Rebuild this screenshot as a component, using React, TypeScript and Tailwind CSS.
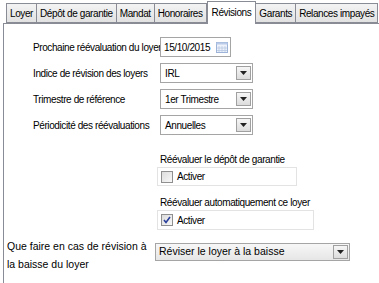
import React from 'react';

const tabs = ['Loyer', 'Dépôt de garantie', 'Mandat', 'Honoraires', 'Révisions', 'Garants', 'Relances impayés'];

const Arrow = () => (
  <div className="ml-auto mr-[1px] flex h-[14px] w-[15px] shrink-0 items-center justify-center border border-[#a0a0a0] bg-gradient-to-b from-[#f6f6f6] to-[#dcdcdc]">
    <svg width="7" height="4" viewBox="0 0 7 4">
      <path d="M0 0h7L3.5 4z" fill="#222" />
    </svg>
  </div>
);

const Select = ({ value, w }: { value: string; w: string }) => (
  <div className={`flex h-[20px] items-center border border-[#a5a5a5] bg-white pl-[4px] ${w}`}>
    <span>{value}</span>
    <Arrow />
  </div>
);

const Row = ({ label, children }: { label: string; children: React.ReactNode }) => (
  <div className="flex items-center">
    <div className="w-[127px] shrink-0">{label}</div>
    {children}
  </div>
);

const CheckBox = ({ checked }: { checked?: boolean }) => (
  <div className="flex h-[12px] w-[12px] shrink-0 items-center justify-center border border-[#8f8f8f] bg-gradient-to-br from-[#dcdcdc] to-[#f8f8f8]">
    {checked && (
      <svg width="8" height="8" viewBox="0 0 8 8">
        <path d="M1 4l2 2.5L7 1" stroke="#2a3f9a" strokeWidth="1.6" fill="none" />
      </svg>
    )}
  </div>
);

const App = () => {
  return (
    <div
      className="relative h-[283px] w-[379px] overflow-hidden whitespace-nowrap bg-white text-[10px] tracking-[-0.4px] text-black"
      style={{ fontFamily: '"Liberation Sans", Arial, sans-serif' }}
    >
      <div className="flex items-end pl-[6px] pt-[1px]">
        {tabs.map((t) =>
          t === 'Révisions' ? (
            <div key={t} className="relative z-10 -mb-[1px] flex h-[23px] items-center border border-b-0 border-[#898c95] bg-white px-[4px] pb-[1px]">
              {t}
            </div>
          ) : (
            <div key={t} className="flex h-[20px] items-center border border-l-0 border-[#898c95] bg-gradient-to-b from-[#f3f3f3] to-[#e2e2e2] px-[3px] first:border-l">
              {t}
            </div>
          )
        )}
      </div>
      <div className="ml-[3px] h-[260px] border-l border-t border-[#898c95] pt-[13px]">
        <div className="flex flex-col gap-[6px] pl-[29px]">
          <Row label="Prochaine réévaluation du loyer">
            <div className="flex h-[20px] w-[71px] items-center border border-[#a5a5a5] bg-white pl-[3px]">
              <span>15/10/2015</span>
              <svg className="ml-auto mr-[1px]" width="14" height="14" viewBox="0 0 14 14">
                <rect x="1.5" y="2.5" width="11" height="10" fill="#eef3fb" stroke="#9db4d8" />
                <rect x="1.5" y="2.5" width="11" height="2" fill="#b9cbe8" />
                <path d="M4 6v6M7 6v6M10 6v6M2 8h10M2 10.5h10" stroke="#b8c8e2" strokeWidth="0.8" />
              </svg>
            </div>
          </Row>
          <Row label="Indice de révision des loyers">
            <Select value="IRL" w="w-[93px]" />
          </Row>
          <Row label="Trimestre de référence">
            <Select value="1er Trimestre" w="w-[93px]" />
          </Row>
          <Row label="Périodicité des réévaluations">
            <Select value="Annuelles" w="w-[93px]" />
          </Row>
        </div>
        <div className="mt-[17px] flex flex-col pl-[153px]">
          <div className="pl-[3px]">Réévaluer le dépôt de garantie</div>
          <div className="flex h-[19px] w-[140px] items-center gap-[4px] border border-[#e3e3e3] pl-[3px]">
            <CheckBox />
            <span>Activer</span>
          </div>
          <div className="mt-[9px] pl-[3px]">Réévaluer automatiquement ce loyer</div>
          <div className="flex h-[20px] w-[157px] items-center gap-[4px] border border-[#e3e3e3] pl-[3px]">
            <CheckBox checked />
            <span>Activer</span>
          </div>
        </div>
        <div className="mt-[7px] flex items-start pl-[3px] text-[10.5px] tracking-normal">
          <div className="w-[148px] leading-[18px]">
            Que faire en cas de révision à<br />la baisse du loyer
          </div>
          <div className="mt-[6px] flex h-[18px] w-[195px] items-center border border-[#a5a5a5] bg-gradient-to-b from-[#f7f7f7] to-[#e6e6e6] pl-[3px]">
            <span>Réviser le loyer à la baisse</span>
            <Arrow />
          </div>
        </div>
      </div>
    </div>
  );
};

export default App;
